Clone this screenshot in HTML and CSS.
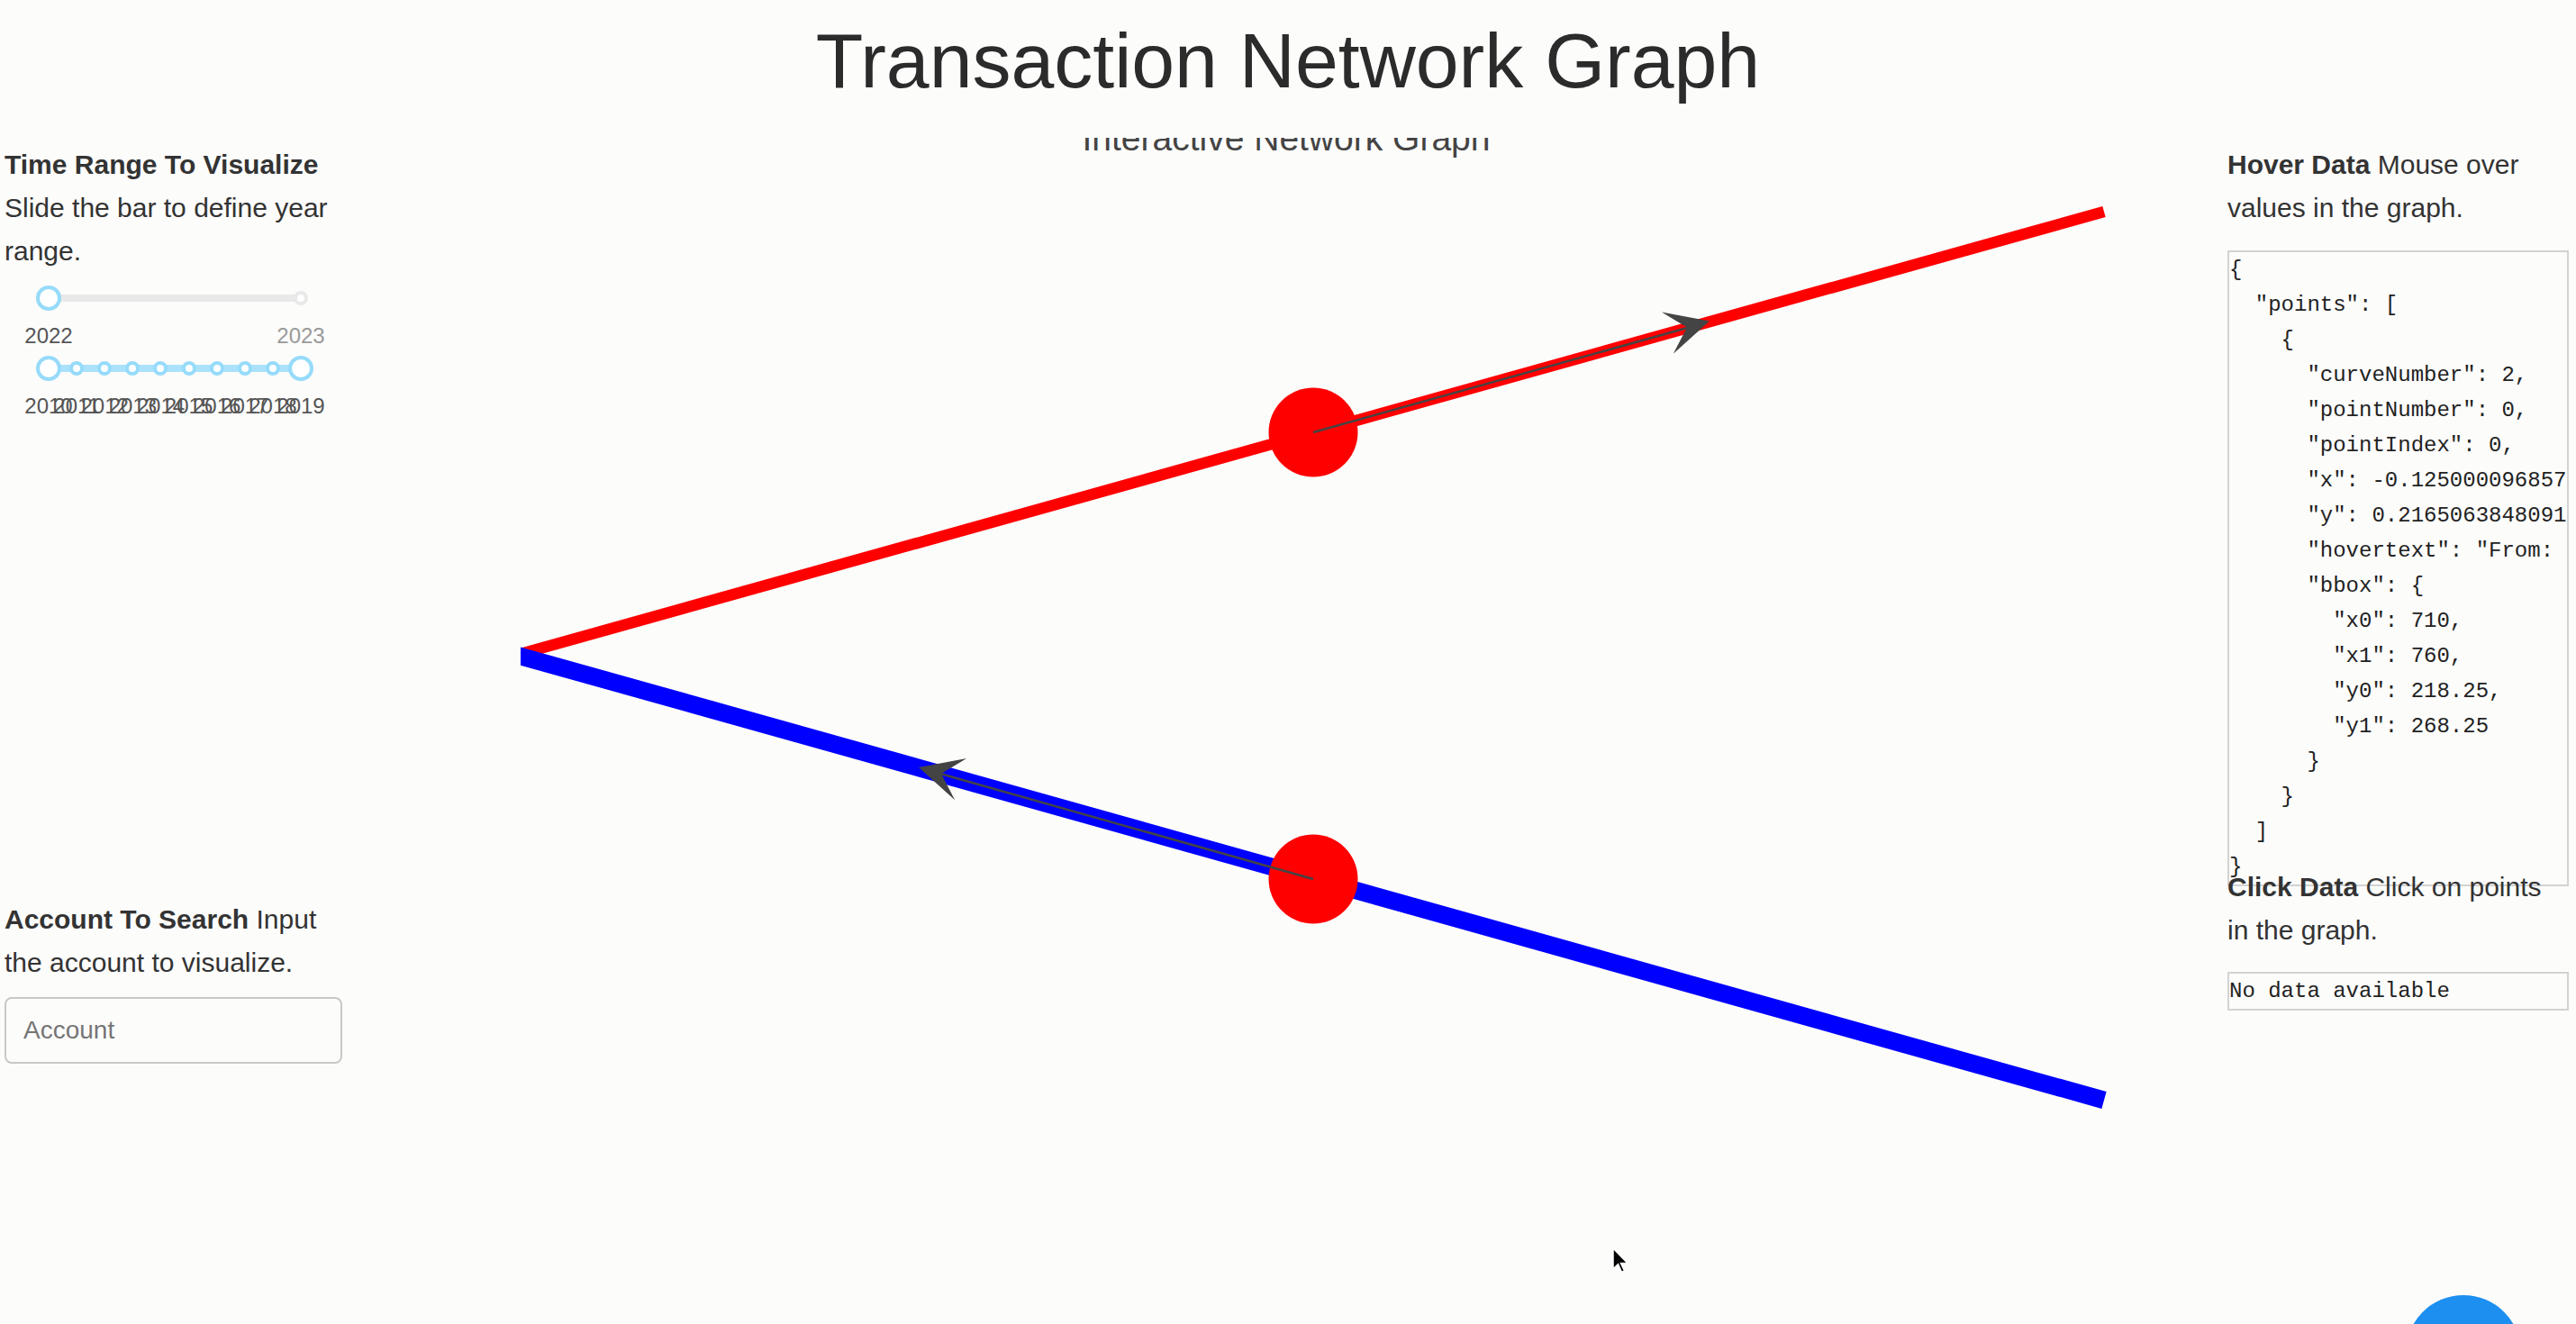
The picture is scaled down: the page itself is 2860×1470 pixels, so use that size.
FILE: index.html
```html
<!DOCTYPE html>
<html lang="en">

<head>
  <meta charset="UTF-8">
  <meta name="viewport" content="width=device-width, initial-scale=1.0">
  <title>Transaction Network Graph</title>
  <link rel="stylesheet" href="styles.css">
</head>

<body>
  <h1 class="title">Transaction Network Graph</h1>

  <div class="main">
    <!-- left: filters -->
    <div class="side left">
      <p class="desc intro"><b>Time Range To Visualize</b> Slide the bar to define year range.</p>

      <div class="range-block">
        <div class="slider">
          <div class="rail"></div>
          <span class="dot active" style="left: 0%;"></span>
          <span class="dot" style="left: 100%;"></span>
          <span class="handle" style="left: 0%;"></span>
        </div>
        <div class="marks">
          <span class="mark active" style="left: 0%;">2022</span>
          <span class="mark" style="left: 100%;">2023</span>
        </div>
      </div>

      <div class="range-block">
        <div class="slider">
          <div class="rail"></div>
          <div class="track" style="left: 0%; width: 100%;"></div>
          <span class="dot active" style="left: 0%;"></span>
          <span class="dot active" style="left: 11.111%;"></span>
          <span class="dot active" style="left: 22.222%;"></span>
          <span class="dot active" style="left: 33.333%;"></span>
          <span class="dot active" style="left: 44.444%;"></span>
          <span class="dot active" style="left: 55.556%;"></span>
          <span class="dot active" style="left: 66.667%;"></span>
          <span class="dot active" style="left: 77.778%;"></span>
          <span class="dot active" style="left: 88.889%;"></span>
          <span class="dot active" style="left: 100%;"></span>
          <span class="handle" style="left: 0%;"></span>
          <span class="handle" style="left: 100%;"></span>
        </div>
        <div class="marks">
          <span class="mark active" style="left: 0%;">2010</span>
          <span class="mark active" style="left: 11.111%;">2011</span>
          <span class="mark active" style="left: 22.222%;">2012</span>
          <span class="mark active" style="left: 33.333%;">2013</span>
          <span class="mark active" style="left: 44.444%;">2014</span>
          <span class="mark active" style="left: 55.556%;">2015</span>
          <span class="mark active" style="left: 66.667%;">2016</span>
          <span class="mark active" style="left: 77.778%;">2017</span>
          <span class="mark active" style="left: 88.889%;">2018</span>
          <span class="mark active" style="left: 100%;">2019</span>
        </div>
      </div>

      <div class="account">
        <p class="desc"><b>Account To Search</b> Input the account to visualize.</p>
        <input class="account-input" type="text" placeholder="Account">
      </div>
    </div>

    <!-- middle: network graph -->
    <div class="graph">
      <svg width="2093" height="1150" viewBox="0 0 2093 1150">
        <defs>
          <clipPath id="plot-area">
            <rect x="198" y="0" width="1895" height="1150"></rect>
          </clipPath>
        </defs>
        <text class="graph-title" x="1048" y="14" text-anchor="middle">Interactive Network Graph</text>

        <g clip-path="url(#plot-area)">
          <line x1="180" y1="578" x2="1956" y2="82" stroke="#ff0000" stroke-width="12.5"></line>
          <line x1="180" y1="570.5" x2="1956" y2="1068.5" stroke="#0000ff" stroke-width="19.5"></line>
        </g>

        <circle cx="1078" cy="327" r="49.5" fill="#ff0000"></circle>
        <circle cx="1078" cy="823" r="49.5" fill="#ff0000"></circle>

        <!-- edge direction arrows -->
        <line x1="1078" y1="327" x2="1495" y2="210.5" stroke="#444" stroke-width="2.5"></line>
        <polygon points="0,0 -48.5,-24 -26,0 -48.5,24" fill="#444" transform="translate(1518 203.6) rotate(-15.66)"></polygon>

        <line x1="1078" y1="823" x2="664" y2="706" stroke="#444" stroke-width="2.5"></line>
        <polygon points="0,0 -48.5,-24 -26,0 -48.5,24" fill="#444" transform="translate(640 699) rotate(195.8)"></polygon>
      </svg>
    </div>

    <!-- right: hover / click data -->
    <div class="side right">
      <p class="desc"><b>Hover Data</b> Mouse over values in the graph.</p>
      <pre class="data hover-data">{
  "points": [
    {
      "curveNumber": 2,
      "pointNumber": 0,
      "pointIndex": 0,
      "x": -0.12500009685754776,
      "y": 0.21650638480910924,
      "hovertext": "From: 0x52bc44d5378309ee2abf1539bf71de1b7d7be3b5",
      "bbox": {
        "x0": 710,
        "x1": 760,
        "y0": 218.25,
        "y1": 268.25
      }
    }
  ]
}</pre>
      <p class="desc click-title"><b>Click Data</b> Click on points in the graph.</p>
      <pre class="data click-data">No data available</pre>
    </div>
  </div>

  <svg class="cursor" width="20" height="30" viewBox="0 0 20 30">
    <path d="M1 1 L1 24 L6.5 18.5 L10.5 27.5 L13.5 26 L9.5 17.5 L17 17.5 Z" fill="#000" stroke="#fff" stroke-width="1.5"></path>
  </svg>

  <div class="fab-wrap">
    <div class="fab"></div>
  </div>
</body>

</html>
```

FILE: styles.css
```css
html {
  overflow: hidden;
}

body {
  margin: 0;
  width: 2860px;
  height: 1470px;
  background: #fcfcfb;
  color: #333;
  font-family: "Liberation Sans", Arial, Helvetica, sans-serif;
  font-size: 30px;
  line-height: 1.6;
  position: relative;
  overflow: hidden;
}

.title {
  margin: 19px 0 0;
  font-size: 86px;
  font-weight: normal;
  line-height: 96px;
  text-align: center;
  color: #2b2b2b;
}

.main {
  display: flex;
  align-items: flex-start;
}

.side {
  padding-top: 44px;
}

.left {
  width: 375px;
  margin-left: 5px;
}

.right {
  width: 379px;
  margin-right: 8px;
}

.desc {
  margin: 0;
}

.graph {
  width: 2093px;
  margin-top: 38px;
}

.graph svg {
  display: block;
  overflow: hidden;
}

.graph-title {
  font-family: "Liberation Sans", Arial, sans-serif;
  font-size: 39px;
  fill: #444;
}

/* sliders */
.range-block {
  margin-top: 18px;
}

.intro {
  margin-bottom: 24px;
}

.slider {
  position: relative;
  height: 8px;
  margin: 0 46px 0 49px;
}

.rail {
  height: 8px;
  border-radius: 4px;
  background: #e9e9e9;
}

.track {
  position: absolute;
  top: 0;
  height: 8px;
  border-radius: 4px;
  background: #abe2fb;
}

.dot {
  position: absolute;
  top: 50%;
  width: 16px;
  height: 16px;
  box-sizing: border-box;
  margin: -8px 0 0 -8px;
  border: 4px solid #e9e9e9;
  border-radius: 50%;
  background: #fff;
}

.dot.active {
  border-color: #96dbfa;
}

.handle {
  position: absolute;
  top: 50%;
  width: 28px;
  height: 28px;
  box-sizing: border-box;
  margin: -14px 0 0 -14px;
  border: 4px solid #96dbfa;
  border-radius: 50%;
  background: #fff;
}

.marks {
  position: relative;
  height: 28px;
  margin: 24px 46px 0 49px;
}

.mark {
  position: absolute;
  top: 0;
  transform: translateX(-50%);
  font-size: 24px;
  line-height: 28px;
  color: #999;
  white-space: nowrap;
}

.mark.active {
  color: #555;
}

/* account search */
.account {
  margin-top: 532px;
}

.account-input {
  display: block;
  width: 375px;
  height: 74px;
  box-sizing: border-box;
  margin-top: 14px;
  padding: 0 19px;
  border: 2px solid #c8c8c8;
  border-radius: 8px;
  background: transparent;
  font-family: "Liberation Sans", Arial, sans-serif;
  font-size: 28px;
  color: #333;
  outline: none;
}

.account-input::placeholder {
  color: #757575;
}

/* hover / click data */
.data {
  margin: 24px 0 0;
  padding: 0;
  border: 2px solid #d3d3d3;
  font-family: "Liberation Mono", "Courier New", monospace;
  font-size: 24px;
  line-height: 39px;
  color: #222;
  overflow: hidden;
  white-space: pre;
}

.hover-data {
  margin-top: 23px;
}

.click-title {
  position: relative;
  margin-top: -23px;
}

.click-data {
  margin-top: 22px;
}

/* overlays */
.cursor {
  position: absolute;
  left: 1790px;
  top: 1385px;
}

.fab-wrap {
  position: absolute;
  left: 2671px;
  top: 1438px;
  width: 128px;
  height: 32px;
  overflow: hidden;
}

.fab {
  width: 128px;
  height: 128px;
  border-radius: 50%;
  background: #1c8ff0;
}
```
